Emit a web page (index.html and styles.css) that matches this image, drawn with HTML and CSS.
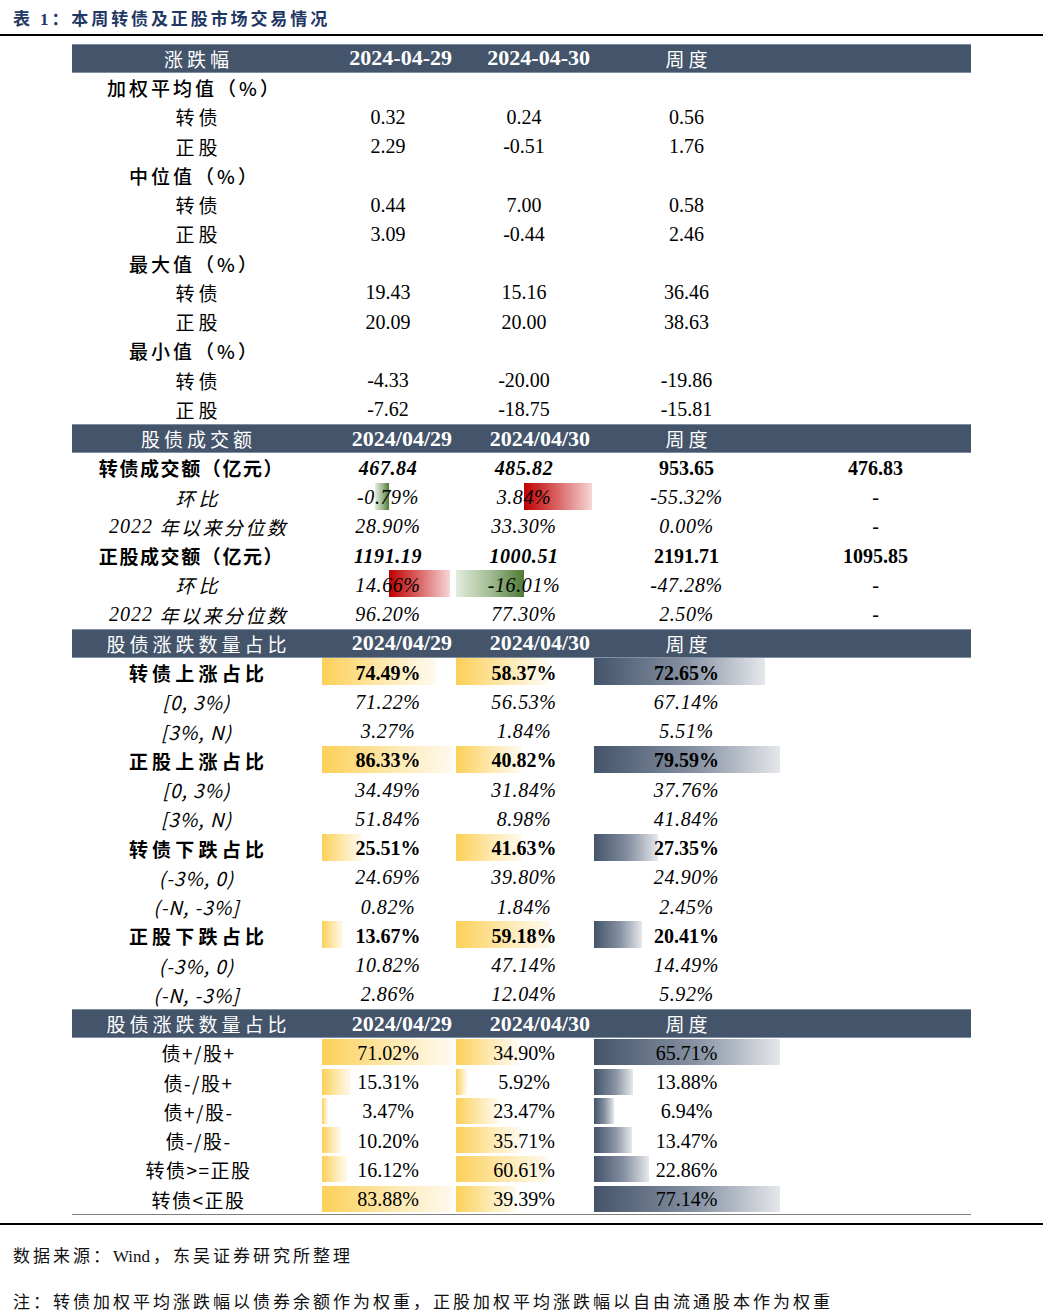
FILE: index.html
```html
<!DOCTYPE html>
<html lang="zh-CN">
<head>
<meta charset="utf-8">
<title>表1 本周转债及正股市场交易情况</title>
<link rel="stylesheet" href="styles.css">
</head>
<body>
<div class="title">表 1：本周转债及正股市场交易情况</div>
<div class="rule"></div>

<div class="table">
  <!-- Section 1 -->
  <div class="row head">
    <div class="c lab">涨跌幅</div><div class="c d">2024-04-29</div><div class="c d">2024-04-30</div><div class="c lab">周度</div><div class="c"></div>
  </div>
  <div class="row"><div class="c lab grp">加权平均值（%）</div><div class="c"></div><div class="c"></div><div class="c"></div><div class="c"></div></div>
  <div class="row"><div class="c lab">转债</div><div class="c">0.32</div><div class="c">0.24</div><div class="c">0.56</div><div class="c"></div></div>
  <div class="row"><div class="c lab">正股</div><div class="c">2.29</div><div class="c">-0.51</div><div class="c">1.76</div><div class="c"></div></div>
  <div class="row"><div class="c lab grp">中位值（%）</div><div class="c"></div><div class="c"></div><div class="c"></div><div class="c"></div></div>
  <div class="row"><div class="c lab">转债</div><div class="c">0.44</div><div class="c">7.00</div><div class="c">0.58</div><div class="c"></div></div>
  <div class="row"><div class="c lab">正股</div><div class="c">3.09</div><div class="c">-0.44</div><div class="c">2.46</div><div class="c"></div></div>
  <div class="row"><div class="c lab grp">最大值（%）</div><div class="c"></div><div class="c"></div><div class="c"></div><div class="c"></div></div>
  <div class="row"><div class="c lab">转债</div><div class="c">19.43</div><div class="c">15.16</div><div class="c">36.46</div><div class="c"></div></div>
  <div class="row"><div class="c lab">正股</div><div class="c">20.09</div><div class="c">20.00</div><div class="c">38.63</div><div class="c"></div></div>
  <div class="row"><div class="c lab grp">最小值（%）</div><div class="c"></div><div class="c"></div><div class="c"></div><div class="c"></div></div>
  <div class="row"><div class="c lab">转债</div><div class="c">-4.33</div><div class="c">-20.00</div><div class="c">-19.86</div><div class="c"></div></div>
  <div class="row"><div class="c lab">正股</div><div class="c">-7.62</div><div class="c">-18.75</div><div class="c">-15.81</div><div class="c"></div></div>

  <!-- Section 2 -->
  <div class="row head">
    <div class="c lab">股债成交额</div><div class="c d">2024/04/29</div><div class="c d">2024/04/30</div><div class="c lab">周度</div><div class="c"></div>
  </div>
  <div class="row"><div class="c lab amt">转债成交额（亿元）</div><div class="c bi">467.84</div><div class="c bi">485.82</div><div class="c b">953.65</div><div class="c b">476.83</div></div>
  <div class="row"><div class="c lab it">环比</div><div class="c i bar neg" style="--x:54px;--w:14px">-0.79%</div><div class="c i bar pos" style="--x:69px;--w:68px">3.84%</div><div class="c i">-55.32%</div><div class="c">-</div></div>
  <div class="row"><div class="c lab it sm"><span class="yr">2022</span>&nbsp;年以来分位数</div><div class="c i">28.90%</div><div class="c i">33.30%</div><div class="c i">0.00%</div><div class="c">-</div></div>
  <div class="row"><div class="c lab amt">正股成交额（亿元）</div><div class="c bi">1191.19</div><div class="c bi">1000.51</div><div class="c b">2191.71</div><div class="c b">1095.85</div></div>
  <div class="row"><div class="c lab it">环比</div><div class="c i bar pos" style="--x:68px;--w:61px">14.66%</div><div class="c i bar neg" style="--x:1px;--w:68px">-16.01%</div><div class="c i">-47.28%</div><div class="c">-</div></div>
  <div class="row"><div class="c lab it sm"><span class="yr">2022</span>&nbsp;年以来分位数</div><div class="c i">96.20%</div><div class="c i">77.30%</div><div class="c i">2.50%</div><div class="c">-</div></div>

  <!-- Section 3 -->
  <div class="row head">
    <div class="c lab">股债涨跌数量占比</div><div class="c d">2024/04/29</div><div class="c d">2024/04/30</div><div class="c lab">周度</div><div class="c"></div>
  </div>
  <div class="row"><div class="c lab main">转债上涨占比</div><div class="c b bar gold" style="--w:114px">74.49%</div><div class="c b bar gold" style="--w:92px">58.37%</div><div class="c b bar navy" style="--w:171px">72.65%</div><div class="c"></div></div>
  <div class="row"><div class="c lab rng">[0, 3%)</div><div class="c i">71.22%</div><div class="c i">56.53%</div><div class="c i">67.14%</div><div class="c"></div></div>
  <div class="row"><div class="c lab rng">[3%, N)</div><div class="c i">3.27%</div><div class="c i">1.84%</div><div class="c i">5.51%</div><div class="c"></div></div>
  <div class="row"><div class="c lab main">正股上涨占比</div><div class="c b bar gold" style="--w:131px">86.33%</div><div class="c b bar gold" style="--w:65px">40.82%</div><div class="c b bar navy" style="--w:187px">79.59%</div><div class="c"></div></div>
  <div class="row"><div class="c lab rng">[0, 3%)</div><div class="c i">34.49%</div><div class="c i">31.84%</div><div class="c i">37.76%</div><div class="c"></div></div>
  <div class="row"><div class="c lab rng">[3%, N)</div><div class="c i">51.84%</div><div class="c i">8.98%</div><div class="c i">41.84%</div><div class="c"></div></div>
  <div class="row"><div class="c lab main">转债下跌占比</div><div class="c b bar gold" style="--w:40px">25.51%</div><div class="c b bar gold" style="--w:66px">41.63%</div><div class="c b bar navy" style="--w:64px">27.35%</div><div class="c"></div></div>
  <div class="row"><div class="c lab rng">(-3%, 0)</div><div class="c i">24.69%</div><div class="c i">39.80%</div><div class="c i">24.90%</div><div class="c"></div></div>
  <div class="row"><div class="c lab rng">(-N, -3%]</div><div class="c i">0.82%</div><div class="c i">1.84%</div><div class="c i">2.45%</div><div class="c"></div></div>
  <div class="row"><div class="c lab main">正股下跌占比</div><div class="c b bar gold" style="--w:21px">13.67%</div><div class="c b bar gold" style="--w:94px">59.18%</div><div class="c b bar navy" style="--w:48px">20.41%</div><div class="c"></div></div>
  <div class="row"><div class="c lab rng">(-3%, 0)</div><div class="c i">10.82%</div><div class="c i">47.14%</div><div class="c i">14.49%</div><div class="c"></div></div>
  <div class="row"><div class="c lab rng">(-N, -3%]</div><div class="c i">2.86%</div><div class="c i">12.04%</div><div class="c i">5.92%</div><div class="c"></div></div>

  <!-- Section 4 -->
  <div class="row head">
    <div class="c lab">股债涨跌数量占比</div><div class="c d">2024/04/29</div><div class="c d">2024/04/30</div><div class="c lab">周度</div><div class="c"></div>
  </div>
  <div class="row s4"><div class="c lab pair">债+/股+</div><div class="c bar gold" style="--w:131px">71.02%</div><div class="c bar gold" style="--w:62px">34.90%</div><div class="c bar navy" style="--w:187px">65.71%</div><div class="c"></div></div>
  <div class="row s4"><div class="c lab pair">债-/股+</div><div class="c bar gold" style="--w:29px">15.31%</div><div class="c bar gold" style="--w:11px">5.92%</div><div class="c bar navy" style="--w:39px">13.88%</div><div class="c"></div></div>
  <div class="row s4"><div class="c lab pair">债+/股-</div><div class="c bar gold" style="--w:6px">3.47%</div><div class="c bar gold" style="--w:43px">23.47%</div><div class="c bar navy" style="--w:20px">6.94%</div><div class="c"></div></div>
  <div class="row s4"><div class="c lab pair">债-/股-</div><div class="c bar gold" style="--w:19px">10.20%</div><div class="c bar gold" style="--w:65px">35.71%</div><div class="c bar navy" style="--w:38px">13.47%</div><div class="c"></div></div>
  <div class="row s4"><div class="c lab pair">转债&gt;=正股</div><div class="c bar gold" style="--w:25px">16.12%</div><div class="c bar gold" style="--w:92px">60.61%</div><div class="c bar navy" style="--w:55px">22.86%</div><div class="c"></div></div>
  <div class="row s4"><div class="c lab pair">转债&lt;正股</div><div class="c bar gold" style="--w:131px">83.88%</div><div class="c bar gold" style="--w:60px">39.39%</div><div class="c bar navy" style="--w:187px">77.14%</div><div class="c"></div></div>
  <div class="table-end"></div>
</div>

<div class="rule rule-bottom"></div>
<div class="notes">
  <p class="note">数据来源：<span class="latin">Wind</span>，东吴证券研究所整理</p>
  <p class="note note2">注：转债加权平均涨跌幅以债券余额作为权重，正股加权平均涨跌幅以自由流通股本作为权重</p>
</div>
</body>
</html>
```

FILE: styles.css
```css
html, body {
  margin: 0;
  padding: 0;
  background: #ffffff;
}

body {
  width: 1046px;
  font-family: "Liberation Serif", "Noto Sans CJK SC", serif;
  color: #000;
}

.title {
  height: 34px;
  padding-left: 13px;
  display: flex;
  align-items: center;
  font-family: "Liberation Serif", "Noto Sans CJK SC", serif;
  font-weight: bold;
  font-size: 17px;
  letter-spacing: 2.9px;
  color: #1f3864;
}

.rule {
  width: 1043px;
  height: 2px;
  background: #000;
}

.table {
  margin: 7.75px 0 0 72px;
  width: 899px;
}

.row {
  display: grid;
  grid-template-columns: 249px 134px 138px 187px 191px;
  height: 29.25px;
}

.c {
  display: flex;
  align-items: center;
  justify-content: center;
  font-size: 20px;
  line-height: 1;
  white-space: nowrap;
  overflow: hidden;
}

.head {
  background: #44546a;
  color: #fff;
  box-shadow: inset 0 1px 0 #7f8ea3, inset 0 -1px 0 #7f8ea3;
}

.head .c.d {
  justify-content: flex-end;
  padding-right: 3px;
  font-weight: bold;
  font-size: 22px;
}

.lab {
  font-family: "Noto Sans CJK SC", sans-serif;
  font-size: 19px;
  letter-spacing: 4px;
  padding-left: 4px;
}

.lab.grp {
  font-weight: 500;
  letter-spacing: 3px;
  padding-right: 8px;
}

.lab.amt {
  font-weight: 600;
  letter-spacing: 1.6px;
  padding-left: 0;
  padding-right: 10px;
}

.lab.it {
  font-style: italic;
}

.lab.sm {
  letter-spacing: 2.4px;
}

.lab .yr {
  font-family: "Liberation Serif", serif;
  font-size: 20px;
  letter-spacing: 1px;
}

.lab.main {
  font-weight: 600;
  letter-spacing: 4.2px;
}

.lab.rng {
  font-style: italic;
  letter-spacing: 1px;
  font-size: 19px;
  padding-left: 0;
}

.lab.pair {
  letter-spacing: 1.5px;
}

.b {
  font-weight: bold;
}

.i {
  font-style: italic;
  letter-spacing: 0.6px;
}

.bi {
  font-weight: bold;
  font-style: italic;
  letter-spacing: 0.6px;
}

.bar {
  background-image: var(--g);
  background-repeat: no-repeat;
  background-size: var(--w) 27px;
  background-position: var(--x, 1px) 0;
}

.s4 .bar {
  background-size: var(--w) 26px;
  background-position: var(--x, 1px) 1px;
}

.gold {
  --g: linear-gradient(to right, #fcd058, #fde9b0 55%, #fffaf0);
}

.navy {
  --g: linear-gradient(to right, #44546a, #8792a3 55%, #e6e8ec);
}

.pos {
  --g: linear-gradient(to right, #c00000, #da6666 50%, #f6d6d6);
  background-size: var(--w) 27px;
}

.neg {
  --g: linear-gradient(to right, #e3ecdd, #a3bd94 50%, #4f7a35);
  background-size: var(--w) 27px;
}

.table-end {
  height: 0;
  border-top: 1px solid #7f7f7f;
}

.rule-bottom {
  margin-top: 8px;
}

.notes {
  padding-left: 13px;
}

.note {
  margin: 20px 0 0 0;
  height: 24px;
  line-height: 24px;
  font-family: "Liberation Serif", "Noto Sans CJK SC", serif;
  font-size: 17px;
  letter-spacing: 3px;
  color: #111;
}

.note .latin {
  letter-spacing: 0;
  margin-right: 3px;
}

.note2 {
  margin-top: 22px;
}
```
